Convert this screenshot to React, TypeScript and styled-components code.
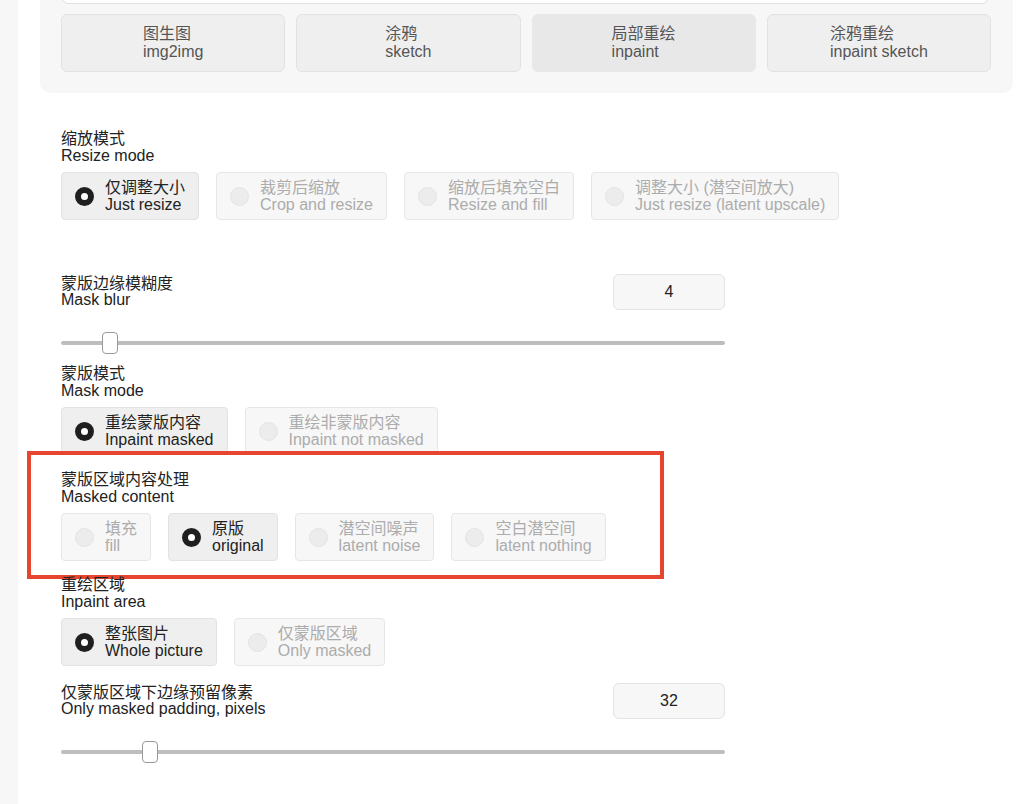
import styled, { createGlobalStyle } from "styled-components";

const GlobalStyle = createGlobalStyle`
  html, body {
    margin: 0;
    padding: 0;
    background: #ffffff;
    overflow: hidden;
  }
  body {
    font-family: "Liberation Sans", "Noto Sans CJK SC", sans-serif;
    color: #222;
  }
`;

const Page = styled.div`
  display: flex;
  min-height: 804px;
`;

const Sidebar = styled.div`
  width: 18px;
  flex: none;
  background: #f7f7f7;
`;

const Main = styled.div`
  flex: 1;
  padding: 0 11px 0 22px;
`;

const Panel = styled.div`
  background: #f7f7f7;
  border-radius: 0 0 10px 10px;
  padding: 0 22px 21px 21px;
`;

const TopField = styled.div`
  height: 40px;
  margin: -38px 3px 0 1px;
  background: #fff;
  border: 1px solid #e0e0e0;
  border-radius: 0 0 6px 6px;
`;

const TabRow = styled.div`
  display: grid;
  grid-template-columns: repeat(4, 1fr);
  gap: 11px;
  margin-top: 10px;
`;

const TabButton = styled.div<{ $active?: boolean }>`
  height: 58px;
  box-sizing: border-box;
  display: flex;
  flex-direction: column;
  align-items: center;
  justify-content: center;
  border-radius: 6px;
  border: 1px solid ${(p) => (p.$active ? "#e8e8e8" : "#e2e2e2")};
  background: ${(p) => (p.$active ? "#e8e8e8" : "#efefef")};
  color: #555;
  font-size: 16px;
  line-height: 18px;
`;

const Content = styled.div`
  padding-left: 21px;
  width: 664px;
`;

const Group = styled.div<{ $top?: number }>`
  position: relative;
  margin-top: ${(p) => p.$top ?? 14}px;
`;

const Label = styled.div`
  font-size: 16px;
  line-height: 16.5px;
  color: #222;
`;

const Options = styled.div`
  display: flex;
  gap: 17px;
  margin-top: 8px;
`;

const Option = styled.div<{ $checked?: boolean }>`
  flex: none;
  white-space: nowrap;
  display: flex;
  align-items: center;
  gap: 11px;
  height: 48px;
  box-sizing: border-box;
  padding: 0 13px 0 13px;
  border-radius: 4px;
  border: 1px solid ${(p) => (p.$checked ? "#e2e2e2" : "#e6e6e6")};
  background: ${(p) => (p.$checked ? "#efefef" : "#f7f7f7")};
  color: ${(p) => (p.$checked ? "#222" : "#acacac")};
  font-size: 16px;
  line-height: 17px;
`;

const Radio = styled.span<{ $checked?: boolean }>`
  flex: none;
  width: 19px;
  height: 19px;
  box-sizing: border-box;
  border-radius: 50%;
  ${(p) =>
    p.$checked
      ? `background: #fff; border: 6px solid #1f1f1f;`
      : `background: #ececec; border: 1px solid #e4e4e4;`}
`;

const SliderHead = styled.div`
  display: flex;
  justify-content: space-between;
  align-items: center;
`;

const NumberBox = styled.div`
  width: 112px;
  height: 36px;
  box-sizing: border-box;
  display: flex;
  align-items: center;
  justify-content: center;
  background: #f7f7f7;
  border: 1px solid #e3e3e3;
  border-radius: 6px;
  font-size: 16px;
  color: #222;
`;

const Track = styled.div`
  position: relative;
  height: 22px;
  margin-top: 22px;
  display: flex;
  align-items: center;
  &::before {
    content: "";
    flex: 1;
    height: 4px;
    border-radius: 2px;
    background: #bdbdbd;
  }
`;

const Thumb = styled.span`
  position: absolute;
  top: 0;
  width: 16px;
  height: 22px;
  box-sizing: border-box;
  background: #fff;
  border: 1px solid #9a9a9a;
  border-radius: 4px;
`;

const Highlight = styled.div`
  position: absolute;
  left: -34px;
  top: -21px;
  width: 637px;
  height: 128px;
  box-sizing: border-box;
  border: 4px solid #e6452f;
  pointer-events: none;
`;

type Opt = { zh: string; en: string; checked?: boolean };

function RadioGroup({ zh, en, items, top, highlight }: { zh: string; en: string; items: Opt[]; top?: number; highlight?: boolean }) {
  return (
    <Group $top={top}>
      <Label>
        {zh}
        <br />
        {en}
      </Label>
      <Options>
        {items.map((o) => (
          <Option key={o.en} $checked={o.checked}>
            <Radio $checked={o.checked} />
            <div>
              {o.zh}
              <br />
              {o.en}
            </div>
          </Option>
        ))}
      </Options>
      {highlight && <Highlight />}
    </Group>
  );
}

function Slider({ zh, en, value, pos, top }: { zh: string; en: string; value: string; pos: number; top: number }) {
  return (
    <Group $top={top}>
      <SliderHead>
        <Label>
          {zh}
          <br />
          {en}
        </Label>
        <NumberBox>{value}</NumberBox>
      </SliderHead>
      <Track>
        <Thumb style={{ left: pos }} />
      </Track>
    </Group>
  );
}

export default function App() {
  return (
    <>
      <GlobalStyle />
      <Page>
        <Sidebar />
        <Main>
          <Panel>
            <TopField />
            <TabRow>
              <TabButton>图生图<br />img2img</TabButton>
              <TabButton>涂鸦<br />sketch</TabButton>
              <TabButton $active>局部重绘<br />inpaint</TabButton>
              <TabButton>涂鸦重绘<br />inpaint sketch</TabButton>
            </TabRow>
          </Panel>
          <Content>
            <RadioGroup
              top={38}
              zh="缩放模式"
              en="Resize mode"
              items={[
                { zh: "仅调整大小", en: "Just resize", checked: true },
                { zh: "裁剪后缩放", en: "Crop and resize" },
                { zh: "缩放后填充空白", en: "Resize and fill" },
                { zh: "调整大小 (潜空间放大)", en: "Just resize (latent upscale)" },
              ]}
            />
            <Slider top={54} zh="蒙版边缘模糊度" en="Mask blur" value="4" pos={41} />
            <RadioGroup
              top={12}
              zh="蒙版模式"
              en="Mask mode"
              items={[
                { zh: "重绘蒙版内容", en: "Inpaint masked", checked: true },
                { zh: "重绘非蒙版内容", en: "Inpaint not masked" },
              ]}
            />
            <RadioGroup
              top={17}
              highlight
              zh="蒙版区域内容处理"
              en="Masked content"
              items={[
                { zh: "填充", en: "fill" },
                { zh: "原版", en: "original", checked: true },
                { zh: "潜空间噪声", en: "latent noise" },
                { zh: "空白潜空间", en: "latent nothing" },
              ]}
            />
            <RadioGroup
              top={16}
              zh="重绘区域"
              en="Inpaint area"
              items={[
                { zh: "整张图片", en: "Whole picture", checked: true },
                { zh: "仅蒙版区域", en: "Only masked" },
              ]}
            />
            <Slider top={17} zh="仅蒙版区域下边缘预留像素" en="Only masked padding, pixels" value="32" pos={81} />
          </Content>
        </Main>
      </Page>
    </>
  );
}
